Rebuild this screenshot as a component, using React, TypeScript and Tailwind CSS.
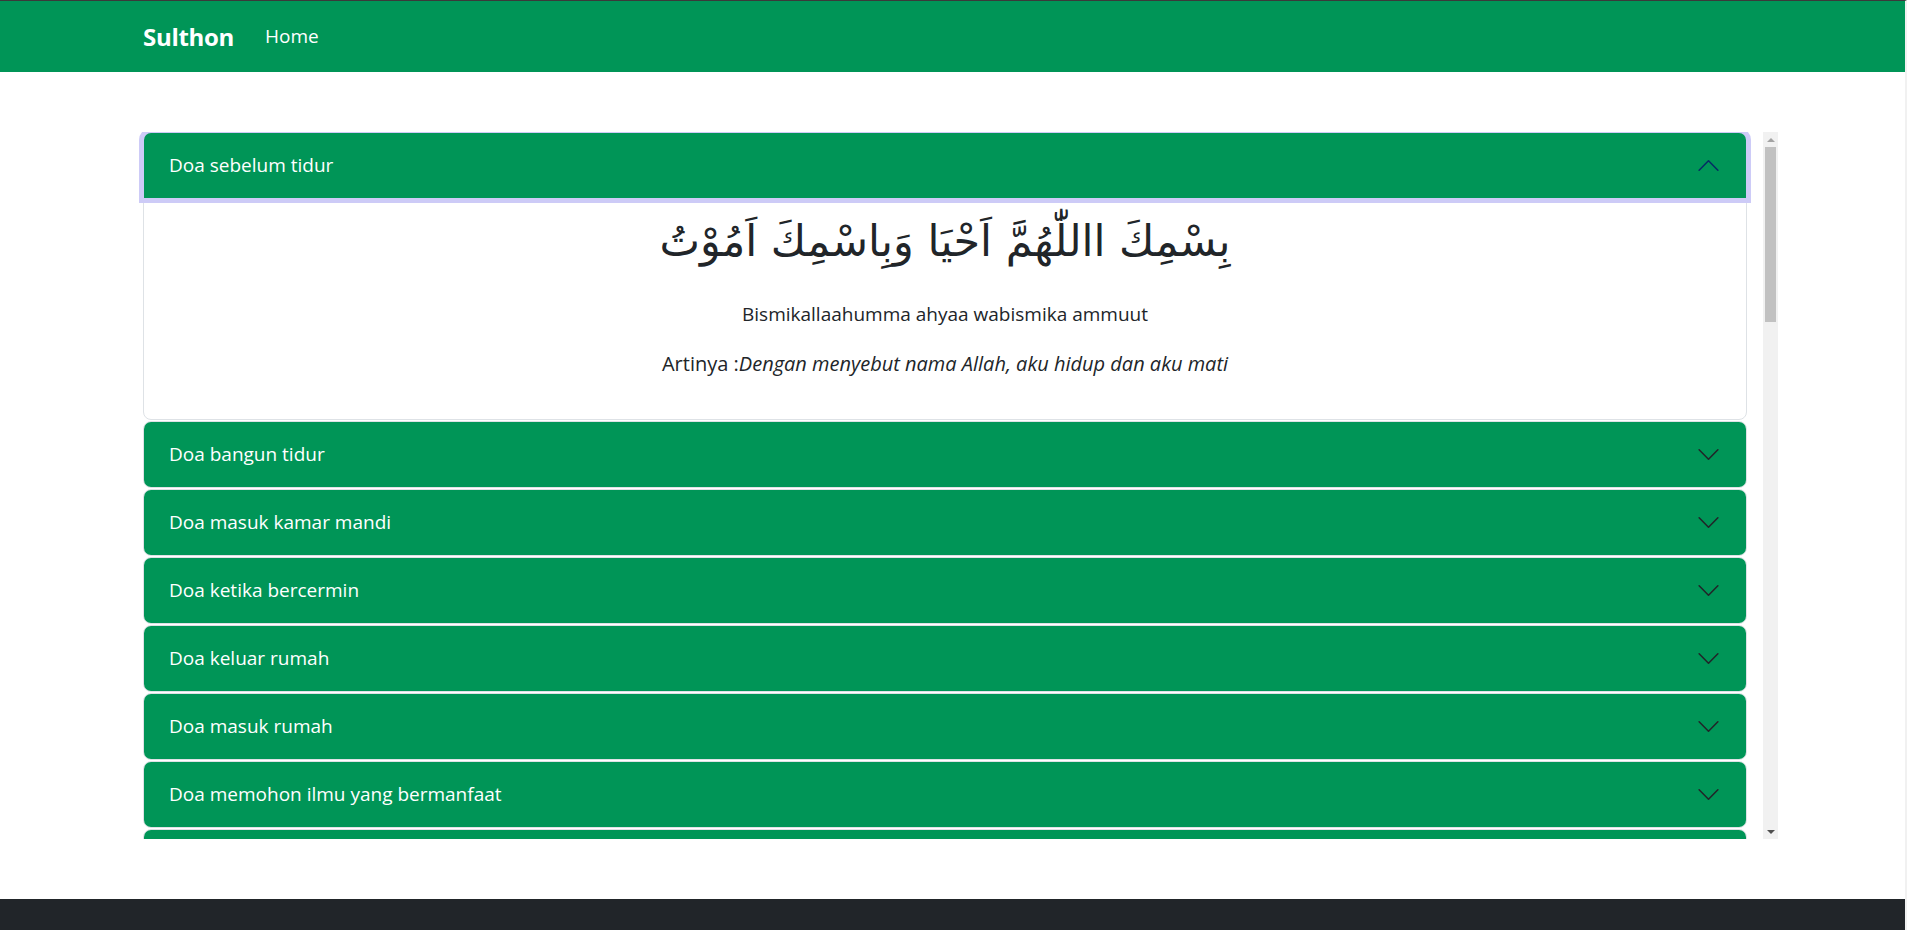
import React from 'react';

const doaList = [
  'Doa sebelum tidur',
  'Doa bangun tidur',
  'Doa masuk kamar mandi',
  'Doa ketika bercermin',
  'Doa keluar rumah',
  'Doa masuk rumah',
  'Doa memohon ilmu yang bermanfaat',
  'Doa sebelum belajar',
];

const Chevron = ({ open }: { open: boolean }) => (
  <svg
    viewBox="0 0 16 16"
    className={open ? 'w-[25px] h-[25px] rotate-180' : 'w-[25px] h-[25px]'}
    fill="none"
    stroke={open ? '#052c65' : '#212529'}
    strokeWidth="1"
    strokeLinecap="round"
    strokeLinejoin="round"
  >
    <path d="M2 5L8 11L14 5" />
  </svg>
);

// the native scrollbar is hidden in the headless browser, so draw the classic one
const ScrollBar = () => (
  <div className="w-[15px] h-[707px] bg-[#f1f1f1] flex flex-col items-center">
    <div className="h-[15px] flex items-center justify-center">
      <div className="w-0 h-0 border-x-[4px] border-x-transparent border-b-[4px] border-b-[#a3a3a3]" />
    </div>
    <div className="w-[11px] h-[175px] bg-[#c1c1c1]" />
    <div className="flex-1" />
    <div className="h-[15px] flex items-center justify-center">
      <div className="w-0 h-0 border-x-[4px] border-x-transparent border-t-[4px] border-t-[#505050]" />
    </div>
  </div>
);

const App = () => {
  return (
    <div className="min-h-[930px] bg-white flex flex-col" style={{ fontFamily: '"Open Sans", "Liberation Sans", sans-serif' }}>
      <div className="flex flex-col flex-1 border-t border-[#3a3a3a] border-r-2 border-r-[#f1f1f1]">
        <nav className="h-[71px] bg-[#009557] flex items-center pl-[143px] gap-[31px]">
          <span className="text-white font-bold text-[24px] tracking-[-0.3px]">Sulthon</span>
          <span className="text-white text-[19px]">Home</span>
        </nav>

        <main className="pt-[60px] pb-[60px] pl-[137px] flex">
          <div className="w-[1626px] h-[707px] overflow-hidden pl-[6px] pr-[16px]">
            <div className="flex flex-col gap-[1px]">
              {doaList.map((title, index) => {
                const open = index === 0;
                return (
                  <div key={index} className="border border-[#dee2e6] rounded-[8px]">
                    <button
                      className={
                        open
                          ? 'w-full h-[65px] flex items-center justify-between pl-[25px] pr-[25px] bg-[#009557] rounded-t-[7px] shadow-[0_0_0_5px_#cdcbf7] relative z-10'
                          : 'w-full h-[65px] flex items-center justify-between pl-[25px] pr-[25px] bg-[#009557] rounded-[7px]'
                      }
                    >
                      <span className="text-white text-[19px]">{title}</span>
                      <Chevron open={open} />
                    </button>
                    {open && (
                      <div className="pt-[20px] pb-[20px] px-[25px] text-center text-[#212529]">
                        <h1
                          dir="rtl"
                          className="h-[71px] leading-[46px] mb-[10px] text-[43px]"
                          style={{ fontFamily: '"DejaVu Sans", sans-serif' }}
                        >
                          بِسْمِكَ االلّٰهُمَّ اَحْيَا وَبِاسْمِكَ اَمُوْتُ
                        </h1>
                        <p className="text-[19px] leading-[30px] mb-[20px]">Bismikallaahumma ahyaa wabismika ammuut</p>
                        <p className="text-[20px] leading-[30px] mb-[20px]">
                          Artinya :<i>Dengan menyebut nama Allah, aku hidup dan aku mati</i>
                        </p>
                      </div>
                    )}
                  </div>
                );
              })}
            </div>
          </div>
          <ScrollBar />
        </main>

        <footer className="flex-1 min-h-[40px] bg-[#212529]" />
      </div>
    </div>
  );
};

export default App;
